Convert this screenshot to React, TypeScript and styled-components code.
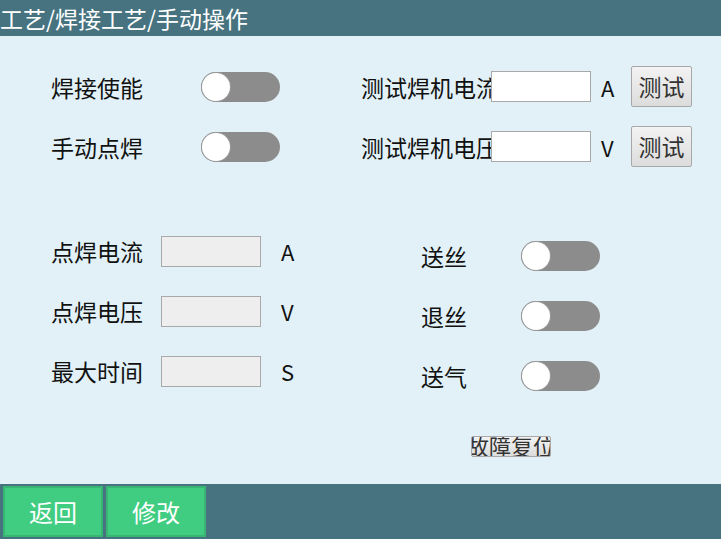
import React, { useState } from 'react'
import styled, { createGlobalStyle } from 'styled-components'

const GlobalStyle = createGlobalStyle`
  html, body {
    margin: 0;
    padding: 0;
    background: #ffffff;
  }
  body {
    font-family: "Noto Sans CJK SC", "Noto Sans", sans-serif;
  }
`

const Page = styled.div`
  width: 721px;
  height: 539px;
  display: flex;
  flex-direction: column;
  overflow: hidden;
`

const TitleBar = styled.div`
  height: 36px;
  background: #46737f;
  color: #ffffff;
  font-size: 23px;
  line-height: 36px;
  white-space: nowrap;
`

const Body = styled.div`
  flex: 1;
  background: #e2f1f7;
  padding: 30px 0 0 51px;
  display: flex;
  flex-direction: column;
`

const TopGrid = styled.div`
  display: grid;
  grid-template-columns: 310px auto;
  grid-auto-rows: 41px;
  row-gap: 19px;
`

const BottomGrid = styled.div`
  margin-top: 69px;
  display: grid;
  grid-template-columns: 370px auto;
`

const Column = styled.div<{ $offset?: number }>`
  display: flex;
  flex-direction: column;
  gap: 30px;
  padding-top: ${p => p.$offset ?? 0}px;
`

const Row = styled.div<{ $h?: number }>`
  display: flex;
  align-items: center;
  height: ${p => p.$h ?? 30}px;
`

const Label = styled.div<{ $w: number }>`
  width: ${p => p.$w}px;
  flex-shrink: 0;
  font-size: 23px;
  color: #111;
  white-space: nowrap;
  line-height: 30px;
`

const Unit = styled.div<{ $w: number; $pl: number }>`
  width: ${p => p.$w}px;
  padding-left: ${p => p.$pl}px;
  font-size: 22px;
  color: #111;
  line-height: 30px;
`

const Field = styled.input<{ $disabledLook?: boolean }>`
  position: relative;
  width: 100px;
  height: 31px;
  box-sizing: border-box;
  border: 1px solid #a9a9a9;
  background: ${p => (p.$disabledLook ? '#eeeeee' : '#ffffff')};
  margin: 0;
  padding: 0 4px;
  font-size: 16px;
  outline: none;
`

const TestButton = styled.button`
  width: 61px;
  height: 41px;
  box-sizing: border-box;
  border: 1px solid #a8a8a8;
  border-radius: 2px;
  background: linear-gradient(#f3f3f3, #dcdcdc);
  font-family: inherit;
  font-size: 23px;
  color: #333;
  padding: 0;
  line-height: 1;
`

const Track = styled.button<{ $on: boolean }>`
  width: 79px;
  height: 30px;
  border: none;
  border-radius: 15px;
  background: ${p => (p.$on ? '#3fcc80' : '#8c8c8c')};
  padding: 0 1px;
  display: flex;
  align-items: center;
  justify-content: ${p => (p.$on ? 'flex-end' : 'flex-start')};
  cursor: pointer;
`

const Knob = styled.span`
  width: 28px;
  height: 28px;
  border-radius: 50%;
  background: #ffffff;
  box-shadow: 0 0 0 1px #9a9a9a;
`

const ResetRow = styled.div`
  margin-top: 45px;
  padding-left: 420px;
`

const ResetButton = styled.button`
  width: 80px;
  height: 21px;
  box-sizing: border-box;
  border: 1px solid #a8a8a8;
  border-radius: 2px;
  background: linear-gradient(#f3f3f3, #dcdcdc);
  font-family: inherit;
  font-size: 22px;
  line-height: 17px;
  color: #333;
  padding: 0;
  overflow: hidden;
  white-space: nowrap;
  display: flex;
  justify-content: center;
`

const Footer = styled.div`
  height: 55px;
  background: #46737f;
  display: flex;
  gap: 3px;
  padding: 2px 0 0 3px;
  box-sizing: border-box;
`

const FooterButton = styled.button`
  width: 100px;
  height: 51px;
  border: 2px solid #38b572;
  background: #40cd82;
  color: #ffffff;
  font-family: inherit;
  font-size: 24px;
  padding: 0;
  box-sizing: border-box;
`

const Toggle: React.FC = () => {
  const [on, setOn] = useState(false)
  return (
    <Track $on={on} onClick={() => setOn(!on)}>
      <Knob />
    </Track>
  )
}

const App: React.FC = () => {
  return (
    <Page>
      <GlobalStyle />
      <TitleBar>工艺/焊接工艺/手动操作</TitleBar>
      <Body>
        <TopGrid>
          <Row $h={41}>
            <Label $w={150}>焊接使能</Label>
            <Toggle />
          </Row>
          <Row $h={41}>
            <Label $w={130}>测试焊机电流</Label>
            <Field />
            <Unit $w={30} $pl={10}>A</Unit>
            <TestButton>测试</TestButton>
          </Row>
          <Row $h={41}>
            <Label $w={150}>手动点焊</Label>
            <Toggle />
          </Row>
          <Row $h={41}>
            <Label $w={130}>测试焊机电压</Label>
            <Field />
            <Unit $w={30} $pl={10}>V</Unit>
            <TestButton>测试</TestButton>
          </Row>
        </TopGrid>

        <BottomGrid>
          <Column>
            {[
              ['点焊电流', 'A'],
              ['点焊电压', 'V'],
              ['最大时间', 'S'],
            ].map(([name, unit]) => (
              <Row key={name}>
                <Label $w={110}>{name}</Label>
                <Field $disabledLook readOnly />
                <Unit $w={30} $pl={20}>{unit}</Unit>
              </Row>
            ))}
          </Column>
          <Column $offset={5}>
            {['送丝', '退丝', '送气'].map(name => (
              <Row key={name}>
                <Label $w={100}>{name}</Label>
                <Toggle />
              </Row>
            ))}
          </Column>
        </BottomGrid>

        <ResetRow>
          <ResetButton>故障复位</ResetButton>
        </ResetRow>
      </Body>
      <Footer>
        <FooterButton>返回</FooterButton>
        <FooterButton>修改</FooterButton>
      </Footer>
    </Page>
  )
}

export default App
